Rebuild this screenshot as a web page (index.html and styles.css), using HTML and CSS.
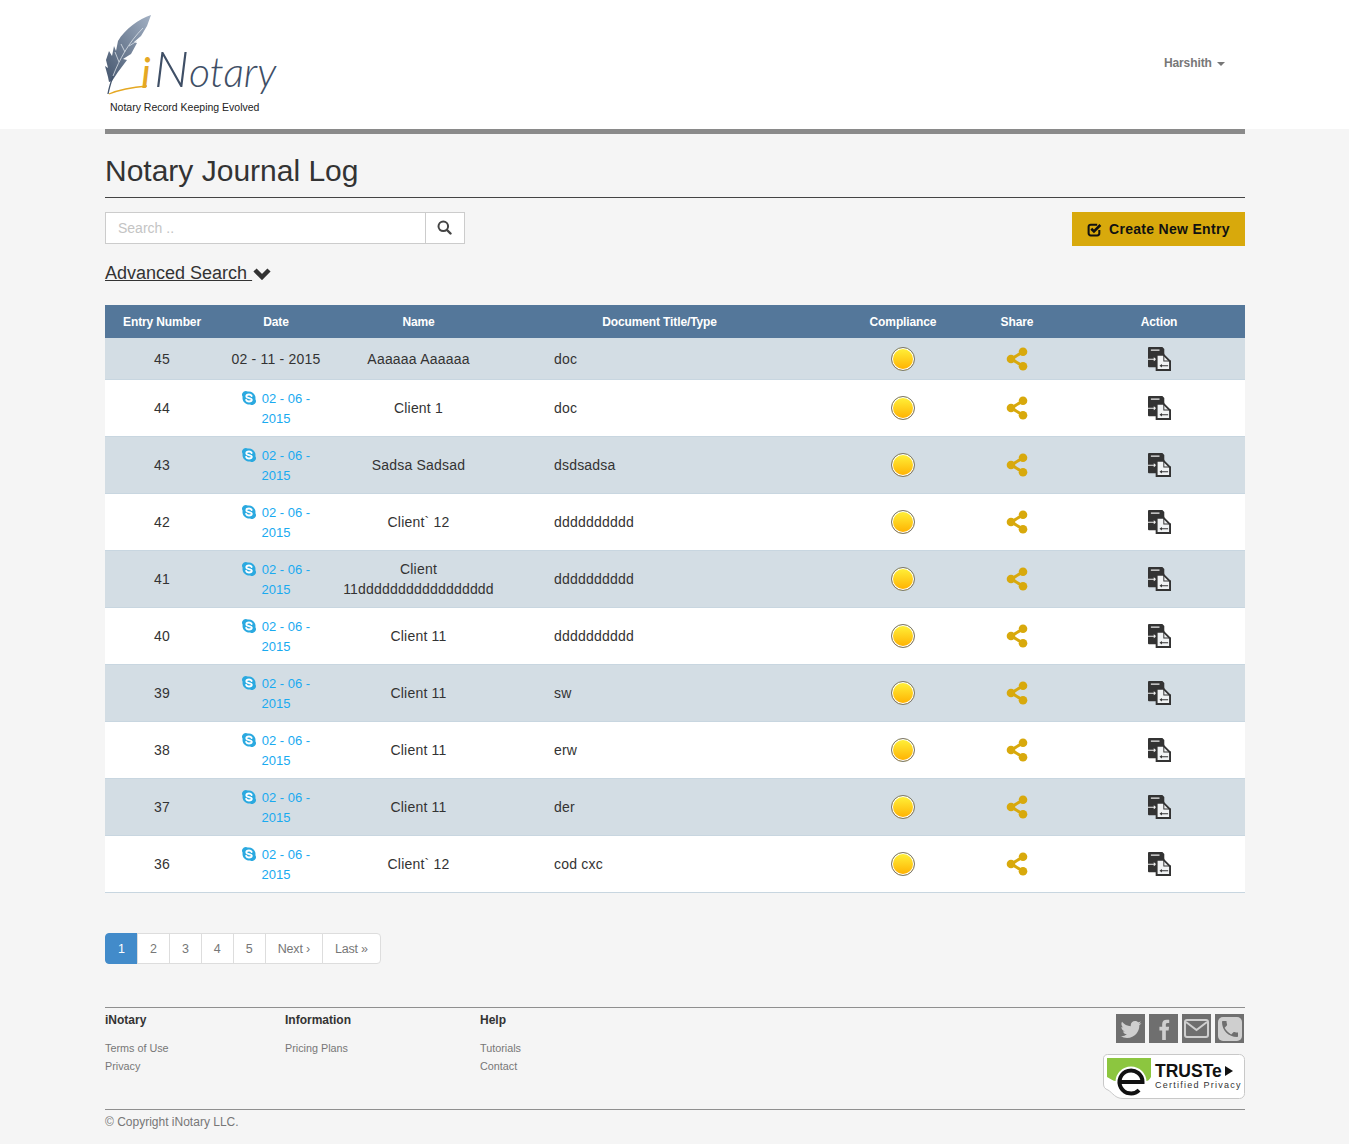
FILE: index.html
```html
<!DOCTYPE html>
<html>
<head>
    <title>Notary Journal Log</title>
    <link rel="stylesheet" href="styles.css">
</head>
<body>
    <svg class="sprite" width="0" height="0">
        <symbol id="skype" viewBox="0 0 14 14">
            <path fill="#2aa9e0" d="M3.800 0a3.800 3.800 0 0 1 2 .6 6.600 6.600 0 0 1 7.600 7.600A3.800 3.800 0 0 1 8.200 13.400 6.600 6.600 0 0 1 .6 5.800 3.800 3.800 0 0 1 3.800 0z"/>
            <path fill="none" stroke="#fff" stroke-width="1.800" stroke-linecap="round" d="M9.700 5C9.200 4 8.100 3.500 7 3.500c-1.500 0-2.700.6-2.700 1.800 0 2.500 5.500 1 5.500 3.500 0 1.100-1.300 1.700-2.800 1.700-1.300 0-2.400-.5-2.900-1.700"/>
        </symbol>
        <symbol id="share" viewBox="0 0 22 24">
            <path fill="none" stroke="#d8a90c" stroke-width="3" d="M17 5 5 12l12 7"/>
            <circle cx="17" cy="4.700" r="4.300" fill="#d8a90c"/>
            <circle cx="5" cy="12" r="4.300" fill="#d8a90c"/>
            <circle cx="17" cy="19.300" r="4.300" fill="#d8a90c"/>
        </symbol>
        <symbol id="docs" viewBox="0 0 24 25" preserveAspectRatio="none">
            <path fill="#333" d="M1 0h14l2 2v6H9v13H1a1 1 0 0 1-1-1V1a1 1 0 0 1 1-1z"/>
            <path fill="#eee" d="M3 2.500h9v1.500H3zM0 12.200h6v-1.400l3 2-3 2v-1.400H0z"/>
            <path fill="#f1f3f4" stroke="#333" stroke-width="2" d="M9 8h7l7 7v9H9z"/>
            <path fill="#333" d="M16 7h1v7h7v1h-8z"/>
            <path fill="#333" d="M12 19.500l2.500-1.800v1.300h6.500v1h-6.500v1.300z"/>
        </symbol>
    </svg>

    <header class="top">
        <div class="wrap top-inner">
            <div class="logo">
                <svg class="logo-art" width="180" height="92" viewBox="0 0 180 92">
                    <defs>
                        <linearGradient id="feather" x1="1" y1="0" x2="0" y2="1">
                            <stop offset="0" stop-color="#a3b1c4"/>
                            <stop offset="1" stop-color="#44556d"/>
                        </linearGradient>
                    </defs>
                    <path fill="url(#feather)" d="M46 5C34 9 20 19 13 31L11 41 9 36 7 46 4 41 1 50 3 58 0 56 3 67 4 72 7 71 13 62 22 50 18 49 26 44 32 33 29 32 36 26 42 16z"/>
                    <path fill="none" stroke="#dde3ea" stroke-width=".8" d="M8 66C14 50 24 32 38 18M14 52l-4-10M20 42l-4-8M24 36l8-5"/>
                    <path fill="none" stroke="#44556d" stroke-width="1.300" d="M3 84C4 78 6 72 8 66"/>
                    <path fill="none" stroke="#e5a823" stroke-width="1.300" d="M4 84C16 79 30 77 42 76"/>
                    <text class="logo-i" x="36" y="78">i</text>
                    <text class="logo-word" x="49" y="77"><tspan class="logo-cap">N</tspan>otary</text>
                </svg>
                <div class="tagline">Notary Record Keeping Evolved</div>
            </div>
            <a class="user" href="#">Harshith <span class="caret"></span></a>
        </div>
    </header>

    <main class="wrap content">
        <h1 class="page-title">Notary Journal Log</h1>

        <div class="tools">
            <form class="search">
                <input class="search-input" type="text" placeholder="Search ..">
                <button class="search-btn" type="button">
                    <svg width="15" height="15" viewBox="0 0 15 15"><circle cx="6.300" cy="6.300" r="4.800" fill="none" stroke="#444" stroke-width="2"/><path stroke="#444" stroke-width="2.400" stroke-linecap="round" d="M10 10l3.500 3.500"/></svg>
                </button>
            </form>
            <a class="create-btn" href="#">
                <svg width="15" height="15" viewBox="0 0 14 14"><path fill="none" stroke="#111" stroke-width="1.900" d="M11.500 7.500v3a2 2 0 0 1-2 2h-6a2 2 0 0 1-2-2v-6a2 2 0 0 1 2-2h6"/><path fill="none" stroke="#111" stroke-width="2.400" d="M4 6.300l2.500 2.500L12.500 2.800"/></svg>
                Create New Entry
            </a>
        </div>

        <div class="advanced">
            <a href="#">Advanced Search </a>
            <svg width="18" height="13" viewBox="0 0 18 13"><path fill="none" stroke="#333" stroke-width="4.500" d="M2 3l7 7 7-7"/></svg>
        </div>

        <table class="log">
            <colgroup>
                <col class="c-entry"><col class="c-date"><col class="c-name"><col class="c-doc"><col class="c-comp"><col class="c-share"><col class="c-action">
            </colgroup>
            <thead>
                <tr><th>Entry Number</th><th>Date</th><th>Name</th><th class="th-doc">Document Title/Type</th><th>Compliance</th><th>Share</th><th>Action</th></tr>
            </thead>
            <tbody>
                <tr>
                    <td>45</td><td>02 - 11 - 2015</td><td>Aaaaaa Aaaaaa</td><td class="doc">doc</td>
                    <td><span class="dot"></span></td>
                    <td><svg class="ic-share"><use href="#share"/></svg></td>
                    <td><svg class="ic-docs"><use href="#docs"/></svg></td>
                </tr>
                <tr>
                    <td>44</td><td class="call"><svg class="ic-skype"><use href="#skype"/></svg>02 - 06 - 2015</td><td>Client 1</td><td class="doc">doc</td>
                    <td><span class="dot"></span></td>
                    <td><svg class="ic-share"><use href="#share"/></svg></td>
                    <td><svg class="ic-docs"><use href="#docs"/></svg></td>
                </tr>
                <tr>
                    <td>43</td><td class="call"><svg class="ic-skype"><use href="#skype"/></svg>02 - 06 - 2015</td><td>Sadsa Sadsad</td><td class="doc">dsdsadsa</td>
                    <td><span class="dot"></span></td>
                    <td><svg class="ic-share"><use href="#share"/></svg></td>
                    <td><svg class="ic-docs"><use href="#docs"/></svg></td>
                </tr>
                <tr>
                    <td>42</td><td class="call"><svg class="ic-skype"><use href="#skype"/></svg>02 - 06 - 2015</td><td>Client` 12</td><td class="doc">dddddddddd</td>
                    <td><span class="dot"></span></td>
                    <td><svg class="ic-share"><use href="#share"/></svg></td>
                    <td><svg class="ic-docs"><use href="#docs"/></svg></td>
                </tr>
                <tr>
                    <td>41</td><td class="call"><svg class="ic-skype"><use href="#skype"/></svg>02 - 06 - 2015</td><td>Client 11ddddddddddddddddd</td><td class="doc">dddddddddd</td>
                    <td><span class="dot"></span></td>
                    <td><svg class="ic-share"><use href="#share"/></svg></td>
                    <td><svg class="ic-docs"><use href="#docs"/></svg></td>
                </tr>
                <tr>
                    <td>40</td><td class="call"><svg class="ic-skype"><use href="#skype"/></svg>02 - 06 - 2015</td><td>Client 11</td><td class="doc">dddddddddd</td>
                    <td><span class="dot"></span></td>
                    <td><svg class="ic-share"><use href="#share"/></svg></td>
                    <td><svg class="ic-docs"><use href="#docs"/></svg></td>
                </tr>
                <tr>
                    <td>39</td><td class="call"><svg class="ic-skype"><use href="#skype"/></svg>02 - 06 - 2015</td><td>Client 11</td><td class="doc">sw</td>
                    <td><span class="dot"></span></td>
                    <td><svg class="ic-share"><use href="#share"/></svg></td>
                    <td><svg class="ic-docs"><use href="#docs"/></svg></td>
                </tr>
                <tr>
                    <td>38</td><td class="call"><svg class="ic-skype"><use href="#skype"/></svg>02 - 06 - 2015</td><td>Client 11</td><td class="doc">erw</td>
                    <td><span class="dot"></span></td>
                    <td><svg class="ic-share"><use href="#share"/></svg></td>
                    <td><svg class="ic-docs"><use href="#docs"/></svg></td>
                </tr>
                <tr>
                    <td>37</td><td class="call"><svg class="ic-skype"><use href="#skype"/></svg>02 - 06 - 2015</td><td>Client 11</td><td class="doc">der</td>
                    <td><span class="dot"></span></td>
                    <td><svg class="ic-share"><use href="#share"/></svg></td>
                    <td><svg class="ic-docs"><use href="#docs"/></svg></td>
                </tr>
                <tr>
                    <td>36</td><td class="call"><svg class="ic-skype"><use href="#skype"/></svg>02 - 06 - 2015</td><td>Client` 12</td><td class="doc">cod cxc</td>
                    <td><span class="dot"></span></td>
                    <td><svg class="ic-share"><use href="#share"/></svg></td>
                    <td><svg class="ic-docs"><use href="#docs"/></svg></td>
                </tr>
            </tbody>
        </table>

        <ul class="pager">
            <li class="active"><a href="#">1</a></li>
            <li><a href="#">2</a></li>
            <li><a href="#">3</a></li>
            <li><a href="#">4</a></li>
            <li><a href="#">5</a></li>
            <li class="word"><a href="#">Next ›</a></li>
            <li class="word"><a href="#">Last »</a></li>
        </ul>
    </main>

    <footer class="wrap foot">
        <div class="foot-top">
            <div class="foot-col col-a">
                <h4>iNotary</h4>
                <a href="#">Terms of Use</a>
                <a href="#">Privacy</a>
            </div>
            <div class="foot-col col-b">
                <h4>Information</h4>
                <a href="#">Pricing Plans</a>
            </div>
            <div class="foot-col">
                <h4>Help</h4>
                <a href="#">Tutorials</a>
                <a href="#">Contact</a>
            </div>
            <div class="foot-right">
                <div class="social">
                    <a href="#"><svg width="24" height="24" viewBox="0 0 24 24"><path fill="#cfcfcf" d="M22.460 6c-.77.35-1.600.58-2.460.69.88-.53 1.560-1.370 1.880-2.380-.83.5-1.750.85-2.720 1.050C18.370 4.500 17.260 4 16 4c-2.350 0-4.270 1.920-4.270 4.290 0 .34.04.67.11.98C8.280 9.090 5.110 7.380 3 4.790c-.37.63-.58 1.370-.58 2.150 0 1.490.75 2.810 1.910 3.560-.71 0-1.370-.2-1.950-.5v.03c0 2.080 1.480 3.820 3.440 4.210a4.220 4.220 0 0 1-1.930.07 4.280 4.280 0 0 0 4 2.980 8.521 8.521 0 0 1-5.330 1.840c-.34 0-.68-.02-1.020-.06C3.440 20.290 5.700 21 8.120 21 16 21 20.330 14.460 20.330 8.790c0-.19 0-.37-.01-.56.84-.6 1.560-1.360 2.140-2.230z"/></svg></a>
                    <a href="#"><svg width="22" height="22" viewBox="0 0 24 24"><path fill="#cfcfcf" d="M14 13.500h3l.6-4H14v-2c0-1.030 0-2 2-2h1.700V2.140c-.326-.043-1.557-.14-2.857-.14C11.928 2 10 3.657 10 6.700v2.800H7v4h3V24h4V13.500z"/></svg></a>
                    <a href="#"><svg width="25" height="19" viewBox="0 0 25 19"><rect x="1" y="1" width="23" height="17" rx="2" fill="none" stroke="#cfcfcf" stroke-width="2"/><path fill="none" stroke="#cfcfcf" stroke-width="2" d="M2 3l10.500 8L23 3"/></svg></a>
                    <a href="#"><svg width="24" height="24" viewBox="0 0 24 24"><rect width="24" height="24" rx="5" fill="#cfcfcf"/><path fill="#6f6f6f" d="M6.620 10.790c1.440 2.830 3.760 5.140 6.590 6.590l2.200-2.200c.27-.27.67-.36 1.020-.24 1.120.37 2.330.57 3.570.57v3.500c0 .55-.45 1-1 1C10.600 20 4 13.400 4 5c0-.55.45-1 1-1h3.500c0 1.250.2 2.450.57 3.570.11.35.03.74-.25 1.020l-2.200 2.200z"/></svg></a>
                </div>
                <svg class="truste" width="142" height="45" viewBox="0 0 142 45">
                    <path fill="#fff" stroke="#c8c8c8" d="M.5 5a4 4 0 0 1 4-4.500h132a5 5 0 0 1 5 5v34a5 5 0 0 1-5 5H20C12 44.500 10 39 5 36 2 35 .5 33 .5 30z"/>
                    <path fill="#8cc63f" d="M4 4h44v19c-2 3-3 4-5 4a15.500 15.500 0 0 0-30 0c-3 0-5-2-9-4z"/>
                    <circle cx="28" cy="28" r="15.500" fill="#fff"/>
                    <path fill="none" stroke="#111" stroke-width="4" d="M36.100 36.100a11.500 11.500 0 1 1 3.400-8.100H17"/>
                    <text class="truste-name" x="52" y="23">TRUSTe</text>
                    <path fill="#111" d="M122 12l8 5-8 5z"/>
                    <text class="truste-sub" x="52" y="34">Certified Privacy</text>
                </svg>
            </div>
        </div>
        <p class="copy">© Copyright iNotary LLC.</p>
    </footer>
</body>
</html>
```

FILE: styles.css
```css
body {
    margin: 0;
    background: #f5f5f5;
    font-family: "Liberation Sans", Arial, sans-serif;
    font-size: 14px;
    line-height: 20px;
    color: #333;
}

a {
    color: inherit;
    text-decoration: none;
}

.sprite {
    position: absolute;
}

.wrap {
    width: 1140px;
    margin-left: 105px;
}

/* header */
.top {
    background: #fff;
    height: 129px;
}

.top-inner {
    display: flex;
    justify-content: space-between;
    align-items: flex-start;
}

.logo {
    padding-top: 10px;
}

.logo-art {
    display: block;
}

.logo-i {
    font-family: Lato, sans-serif;
    font-style: italic;
    font-weight: 400;
    font-size: 42px;
    fill: #e5a823;
}

.logo-word {
    font-family: Lato, sans-serif;
    font-style: italic;
    font-weight: 300;
    font-size: 41px;
    fill: #3f4f66;
}

.logo-cap {
    font-size: 50px;
}

.tagline {
    margin: -1px 0 0 5px;
    font-size: 10.500px;
    line-height: 12px;
    color: #222;
}

.user {
    margin: 53px 20px 0 0;
    font-size: 12px;
    font-weight: bold;
    letter-spacing: -.1px;
    color: #777;
}

.caret {
    display: inline-block;
    margin-left: 2px;
    vertical-align: middle;
    border-top: 4px solid #777;
    border-left: 4px solid transparent;
    border-right: 4px solid transparent;
}

/* page */
.content {
    border-top: 5px solid #8a8a8a;
}

.page-title {
    margin: 0;
    padding: 20px 0 10px;
    font-size: 30px;
    font-weight: normal;
    line-height: 33px;
    color: #333;
    border-bottom: 1px solid #444;
}

.tools {
    display: flex;
    justify-content: space-between;
    align-items: flex-start;
    margin-top: 14px;
}

.search {
    display: flex;
}

.search-input {
    width: 321px;
    height: 32px;
    box-sizing: border-box;
    padding: 0 12px;
    border: 1px solid #ccc;
    background: #fff;
    font-family: inherit;
    font-size: 14px;
}

.search-input::placeholder {
    color: #c4c4c4;
}

.search-btn {
    width: 40px;
    height: 32px;
    margin-left: -1px;
    padding: 2px 2px 0 0;
    border: 1px solid #ccc;
    background: #fff;
}

.create-btn {
    display: flex;
    align-items: center;
    gap: 7px;
    box-sizing: border-box;
    width: 173px;
    height: 34px;
    padding-left: 15px;
    background: #d8a90c;
    color: #111;
    font-weight: bold;
    letter-spacing: .3px;
}

.advanced {
    display: flex;
    align-items: center;
    gap: 1px;
    margin-top: 17px;
    font-size: 18px;
}

.advanced a {
    text-decoration: underline;
    white-space: pre;
}

/* table */
.log {
    width: 1140px;
    margin-top: 22px;
    border-collapse: collapse;
    table-layout: fixed;
}

.c-entry { width: 114px; }
.c-date { width: 114px; }
.c-name { width: 171px; }
.c-doc { width: 341px; }
.c-comp { width: 116px; }
.c-share { width: 112px; }
.c-action { width: 172px; }

.log th {
    height: 33px;
    padding: 0;
    background: #54779a;
    color: #fff;
    font-size: 12px;
    font-weight: bold;
    letter-spacing: -.12px;
}

.log .th-doc {
    padding-right: 30px;
}

.log td {
    height: 25px;
    padding: 8px;
    text-align: center;
    letter-spacing: .2px;
    border-bottom: 1px solid #c8d6e0;
    background: #fff;
}

.log tbody tr:nth-child(odd) td {
    background: #d3dde4;
}

.log .doc {
    padding-left: 50px;
    text-align: left;
}

.log .call {
    padding: 9px 8px 7px;
    color: #19aaf0;
    font-size: 13px;
    letter-spacing: 0;
}

.ic-skype {
    width: 14px;
    height: 14px;
    margin-right: 6px;
    vertical-align: -2px;
}

.dot {
    display: block;
    box-sizing: border-box;
    width: 24px;
    height: 24px;
    margin: 0 auto;
    border: 1px solid #777;
    border-radius: 50%;
    box-shadow: inset 0 0 0 1px #fff;
    background: linear-gradient(#fff23a, #ffb000);
}

.ic-share {
    display: block;
    width: 22px;
    height: 24px;
    margin: 0 auto;
}

.ic-docs {
    display: block;
    width: 23px;
    height: 24px;
    margin: 0 auto;
}

/* pagination */
.pager {
    display: flex;
    margin: 40px 0 0;
    padding: 0;
    list-style: none;
    font-size: 12.500px;
}

.pager a {
    display: block;
    height: 29px;
    padding: 0 12px;
    border: 1px solid #ddd;
    margin-left: -1px;
    background: #fff;
    color: #777;
    line-height: 30px;
}

.pager .word a {
    letter-spacing: -.2px;
}

.pager li:first-child a {
    margin-left: 0;
    border-radius: 4px 0 0 4px;
}

.pager li:last-child a {
    border-radius: 0 4px 4px 0;
}

.pager .active a {
    background: #428bca;
    border-color: #428bca;
    color: #fff;
}

/* footer */
.foot {
    margin-top: 43px;
    border-top: 1px solid #8f8f8f;
}

.foot-top {
    display: flex;
    height: 101px;
    border-bottom: 1px solid #8f8f8f;
}

.foot-col {
    padding-top: 4px;
}

.col-a { width: 180px; }
.col-b { width: 195px; }

.foot-col h4 {
    margin: 0 0 11px;
    font-size: 12px;
    line-height: 16px;
    color: #333;
}

.foot-col a {
    display: block;
    font-size: 10.800px;
    line-height: 18px;
    color: #777;
}

.foot-right {
    display: flex;
    flex-direction: column;
    align-items: flex-end;
    margin-left: auto;
    padding-top: 6px;
}

.social {
    display: flex;
    gap: 4px;
    margin-right: 1px;
}

.social a {
    display: flex;
    align-items: center;
    justify-content: center;
    width: 29px;
    height: 29px;
    background: #6f6f6f;
}

.truste {
    display: block;
    margin-top: 11px;
}

.truste-name {
    font-family: "Liberation Sans", sans-serif;
    font-weight: bold;
    font-size: 17.500px;
    fill: #111;
}

.truste-sub {
    font-family: "Liberation Sans", sans-serif;
    font-size: 9px;
    letter-spacing: 1.250px;
    fill: #333;
}

.copy {
    margin: 0;
    padding: 2px 0 13px;
    font-size: 12px;
    color: #777;
}
```
